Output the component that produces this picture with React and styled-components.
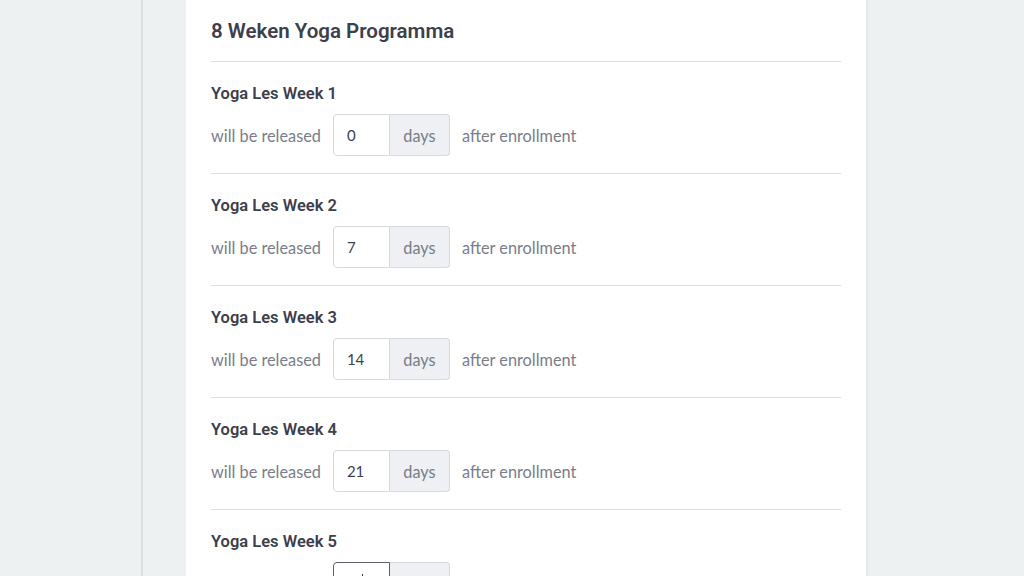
import React from 'react';
import styled, { createGlobalStyle } from 'styled-components';

const GlobalStyle = createGlobalStyle`
  html, body {
    margin: 0;
    padding: 0;
    background: #eef1f2;
    overflow: hidden;
  }
`;

const Page = styled.div`
  display: flex;
  height: 576px;
  background: #eef1f2;
`;

const SideGutter = styled.div`
  width: 141px;
  flex-shrink: 0;
  border-right: 2px solid #dcdee3;
`;

const Content = styled.div`
  flex: 1;
  padding: 0 0 0 43px;
  display: flex;
  align-items: flex-start;
`;

const Card = styled.section`
  width: 682px;
  background: #fff;
  border-right: 2px solid #e6e8eb;
  padding: 0 25px 0 25px;
  box-sizing: border-box;
  height: 576px;
  overflow: hidden;
`;

const Title = styled.h2`
  margin: 0;
  padding: 19px 0 18px;
  font-family: Roboto, "Liberation Sans", sans-serif;
  font-weight: 600;
  font-size: 20.5px;
  line-height: 24px;
  color: #3d3f4c;
  border-bottom: 1px solid #dcdde2;
`;

const Lesson = styled.div`
  padding: 22px 0 17px;
  border-bottom: 1px solid #dcdde2;
`;

const LessonName = styled.h3`
  margin: 0 0 10px;
  font-family: Roboto, "Liberation Sans", sans-serif;
  font-weight: 600;
  font-size: 16.5px;
  line-height: 20px;
  color: #3d3f4c;
`;

const ReleaseRow = styled.div`
  display: flex;
  align-items: center;
  gap: 12px;
  font-family: Lato, "Open Sans", sans-serif;
  font-size: 16.3px;
  color: #7a7d89;
`;

const InputGroup = styled.div`
  display: flex;
  height: 42px;
`;

const DayInput = styled.div`
  width: 57px;
  padding-left: 13px;
  box-sizing: border-box;
  display: flex;
  align-items: center;
  justify-content: ${p => (p.$focused ? 'center' : 'flex-start')};
  color: #3d3f4c;
  font-size: 15px;
  background: #fff;
  border: 1px solid ${p => (p.$focused ? '#5b5d68' : '#d6d8dd')};
  border-radius: 4px 0 0 4px;
`;

const Caret = styled.span`
  width: 1px;
  height: 18px;
  background: #3d3f4c;
  margin-left: -11px;
`;

const Addon = styled.div`
  width: 60px;
  box-sizing: border-box;
  display: flex;
  align-items: center;
  justify-content: center;
  background: #eef0f3;
  color: #7a7d89;
  border: 1px solid #d6d8dd;
  border-left: none;
  border-radius: 0 4px 4px 0;
`;

const lessons = [
  { name: 'Yoga Les Week 1', days: '0' },
  { name: 'Yoga Les Week 2', days: '7' },
  { name: 'Yoga Les Week 3', days: '14' },
  { name: 'Yoga Les Week 4', days: '21' },
  { name: 'Yoga Les Week 5', days: '', focused: true },
];

export default function App() {
  return (
    <>
      <GlobalStyle />
      <Page>
        <SideGutter />
        <Content>
          <Card>
            <Title>8 Weken Yoga Programma</Title>
            {lessons.map(l => (
              <Lesson key={l.name}>
                <LessonName>{l.name}</LessonName>
                <ReleaseRow>
                  <span>will be released</span>
                  <InputGroup>
                    <DayInput $focused={l.focused}>
                      {l.focused ? <Caret /> : l.days}
                    </DayInput>
                    <Addon>days</Addon>
                  </InputGroup>
                  <span>after enrollment</span>
                </ReleaseRow>
              </Lesson>
            ))}
          </Card>
        </Content>
      </Page>
    </>
  );
}
